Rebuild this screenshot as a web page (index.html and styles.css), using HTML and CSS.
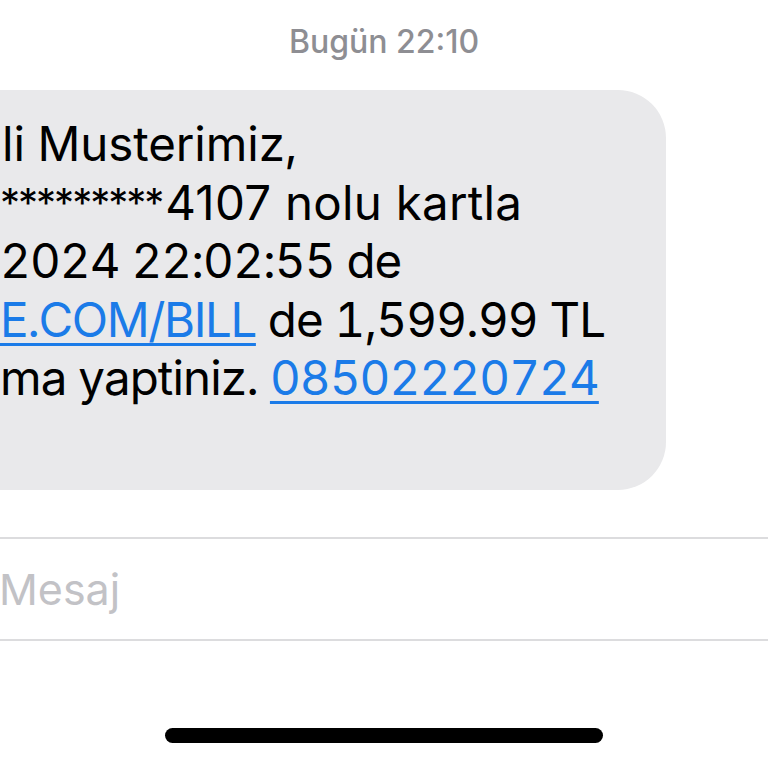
FILE: index.html
```html
<!DOCTYPE html>
<html lang="tr">
<head>
<meta charset="utf-8">
<title>Mesajlar</title>
<link rel="stylesheet" href="styles.css">
</head>
<body>
<div class="screen">
  <div class="stamp">Bugün 22:10</div>
  <div class="thread">
    <div class="bubble">
      <div class="line first">li Musterimiz,</div>
      <div class="line second"><span class="stars">*********</span>4107 nolu kartla</div>
      <div class="line">2024 22:02:55 de</div>
      <div class="line"><a class="link caps" href="#">E.COM/BILL</a> de 1,599.99 TL</div>
      <div class="line">ma yaptiniz. <a class="link" href="#">08502220724</a></div>
    </div>
  </div>
  <div class="composer">
    <div class="field">Mesaj</div>
  </div>
  <div class="home-wrap"><div class="home"></div></div>
</div>
</body>
</html>
```

FILE: styles.css
```css
html, body {
  margin: 0;
  padding: 0;
  background: #ffffff;
}
body {
  width: 768px;
  height: 768px;
  overflow: hidden;
  font-family: "Inter", "Liberation Sans", sans-serif;
}
.screen {
  display: flex;
  flex-direction: column;
  width: 768px;
  height: 768px;
  overflow: hidden;
}
.stamp {
  margin-top: 23px;
  text-align: center;
  font-size: 32px;
  line-height: 38px;
  font-weight: 500;
  color: #8e8e93;
}
.thread {
  margin-top: 29px;
  display: flex;
}
.bubble {
  margin-left: -60px;
  width: 726px;
  box-sizing: border-box;
  padding: 25px 0 82px 60px;
  background: #e9e9eb;
  border-radius: 48px;
  font-size: 47.5px;
  line-height: 58.5px;
  color: #000000;
  letter-spacing: -0.9px;
  font-variant-numeric: tabular-nums;
}
.line {
  white-space: nowrap;
  height: 58.5px;
}
.first {
  padding-left: 2px;
  letter-spacing: -0.1px;
}
.second {
  letter-spacing: 0.25px;
  font-variant-numeric: normal;
}
.stars {
  font-size: 40px;
  line-height: 40px;
  font-variant-numeric: normal;
  letter-spacing: -2px;
  margin-right: 3px;
  vertical-align: 3px;
}
.link {
  color: #1b7be8;
  text-decoration: underline;
  text-decoration-thickness: 3px;
  text-underline-offset: 6px;
}
.caps {
  letter-spacing: -1.4px;
}
.composer {
  margin-top: 47px;
  margin-left: -60px;
  margin-right: -60px;
}
.field {
  height: 100px;
  border: 2px solid #dcdcde;
  border-radius: 52px;
  padding-left: 57px;
  display: flex;
  align-items: center;
  font-size: 43px;
  color: #c2c2c6;
}
.home-wrap {
  margin-top: 87px;
  display: flex;
  justify-content: center;
}
.home {
  width: 438px;
  height: 15px;
  border-radius: 8px;
  background: #000000;
}
```
